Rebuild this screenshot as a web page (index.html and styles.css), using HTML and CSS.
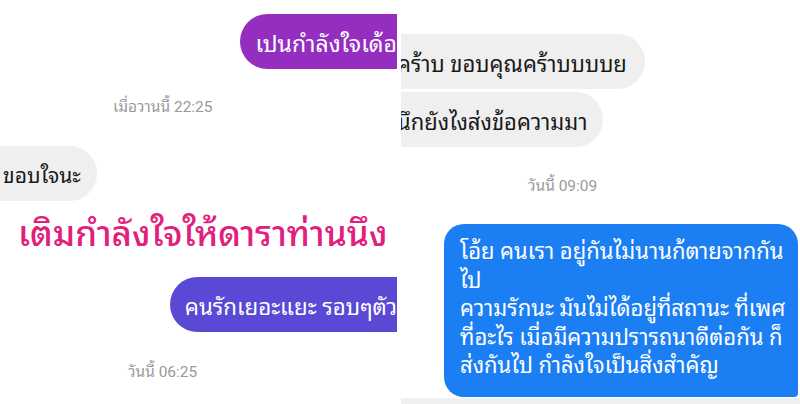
FILE: index.html
```html
<!DOCTYPE html>
<html lang="th">
<head>
<meta charset="utf-8">
<title>Chat</title>
<link rel="stylesheet" href="styles.css">
</head>
<body>
<div class="page">
  <section class="pane pane-left">
    <div class="row row-out r1"><div class="bubble purple">เปนกำลังใจเด้อ</div></div>
    <div class="stamp s1">เมื่อวานนี้ 22:25</div>
    <div class="row row-in r2"><div class="bubble grey">ขอบใจนะ</div></div>
    <div class="caption">เติมกำลังใจให้ดาราท่านนึง</div>
    <div class="row row-out r3"><div class="bubble indigo">คนรักเยอะแยะ รอบๆตัว</div></div>
    <div class="stamp s2">วันนี้ 06:25</div>
  </section>
  <section class="pane pane-right">
    <div class="row row-in ra"><div class="bubble grey wide">คร้าบ ขอบคุณคร้าบบบบย</div></div>
    <div class="row row-in rb"><div class="bubble grey wide2">นึกยังไงส่งข้อความมา</div></div>
    <div class="stamp s3">วันนี้ 09:09</div>
    <div class="row row-out rc"><div class="bubble blue">โอ้ย คนเรา อยู่กันไม่นานก้ตายจากกัน<br>ไป<br>ความรักนะ มันไม่ได้อยู่ที่สถานะ ที่เพศ<br>ที่อะไร เมื่อมีความปรารถนาดีต่อกัน ก็<br>ส่งกันไป กำลังใจเป็นสิ่งสำคัญ</div></div>
    <div class="foot"></div>
  </section>
</div>
</body>
</html>
```
FILE: styles.css
```css
html, body {
  margin: 0;
  padding: 0;
  background: #ffffff;
}
body {
  font-family: Roboto, "Noto Sans Thai Looped", sans-serif;
}
.page {
  width: 800px;
  height: 404px;
  display: flex;
  gap: 4px;
  overflow: hidden;
}
.pane {
  position: relative;
  overflow: hidden;
  display: flex;
  flex-direction: column;
  background: #ffffff;
}
.pane-left {
  width: 397px;
}
.pane-right {
  flex: 1;
}
.row {
  display: flex;
}
.row-out {
  justify-content: flex-end;
}
.row-in {
  justify-content: flex-start;
}
.bubble {
  height: 55px;
  display: flex;
  align-items: center;
  font-size: 22px;
  white-space: nowrap;
  box-sizing: border-box;
}
.purple {
  background: #952ec0;
  color: #fff;
  border-radius: 28px 0 0 28px;
  padding: 0 6px 0 15px;
  margin-right: -6px;
  font-size: 23px;
}
.indigo {
  background: #5a49d4;
  color: #fff;
  border-radius: 28px 0 0 28px;
  padding: 0 6px 0 15px;
  margin-right: -6px;
  font-size: 22.3px;
}
.grey {
  background: #efefef;
  color: #1a1a1a;
  border-radius: 0 28px 28px 0;
  padding: 0 16px 0 3px;
}
.pane-left .grey {
  font-size: 21px;
}
.r1 { margin-top: 14px; }
.stamp {
  font-size: 15.5px;
  color: #9a9a9a;
  height: 20px;
  line-height: 20px;
}
.s1 { margin-top: 28px; padding-left: 113px; }
.r2 { margin-top: 29px; }
.caption {
  margin-top: 10px;
  padding-left: 18px;
  font-size: 35px;
  line-height: 48px;
  color: #e2207c;
  font-weight: 500;
  text-shadow: 0 0 3px #fff, 0 0 3px #fff;
}
.r3 { margin-top: 18px; }
.s2 { margin-top: 30px; padding-left: 128px; }

.ra { margin-top: 34px; }
.wide { padding-left: 0; margin-left: -4px; width: 248px; }
.rb { margin-top: 3px; }
.wide2 { padding-left: 0; margin-left: -4px; width: 206px; }
.s3 { margin-top: 29px; padding-left: 127px; }
.rc { margin-top: 28px; }
.blue {
  height: 173px;
  width: 354px;
  margin-right: 2px;
  background: #1b7ef3;
  color: #fff;
  border-radius: 20px 20px 4px 20px;
  white-space: normal;
  display: block;
  padding: 14px 2px 0 16px;
  line-height: 28.6px;
  font-size: 22px;
}
.foot {
  flex: 1;
  background: #f0f0f0;
  margin-top: 1px;
}
```
